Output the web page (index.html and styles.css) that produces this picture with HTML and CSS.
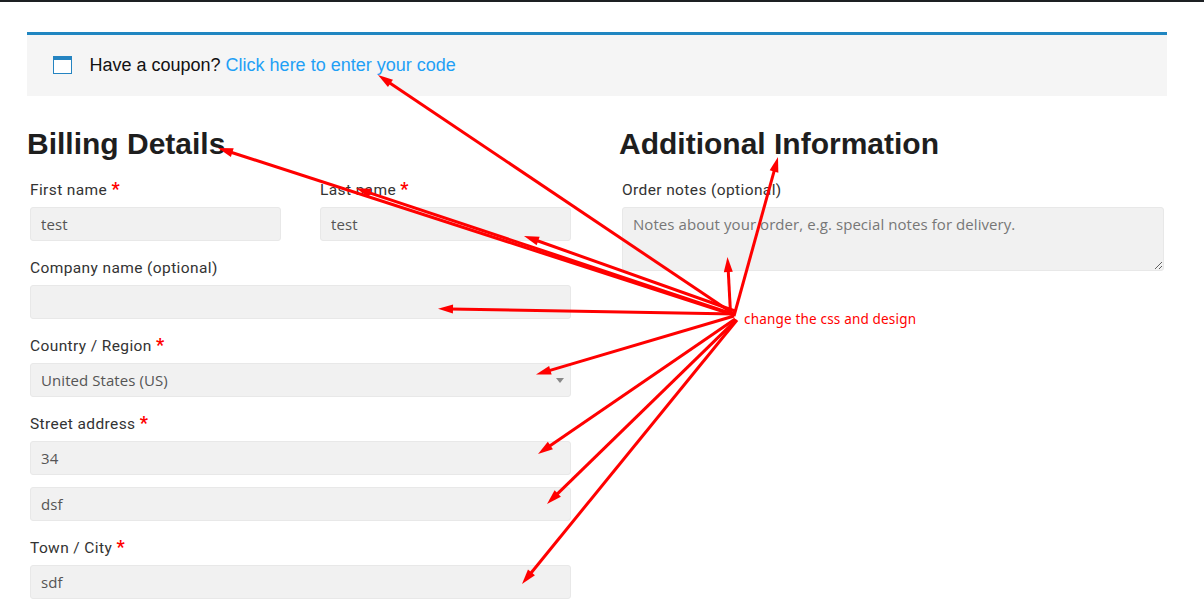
FILE: index.html
```html
<!DOCTYPE html>
<html lang="en">
<head>
<meta charset="utf-8">
<title>Checkout</title>
<link rel="stylesheet" href="styles.css">
</head>
<body>
<main class="page">
  <div class="coupon">
    <svg class="coupon-icon" width="20" height="19" viewBox="0 0 20 19"><path fill="#fff" d="M1 3h17v14H1z"/><path fill="#2584c1" d="M0 0h19v4H0zM0 4h1v14H0zM18 4h1v14h-1zM0 17h19v1H0z"/></svg>
    <p>Have a coupon? <a class="coupon-link">Click here to enter your code</a></p>
  </div>
  <form class="columns">
    <section class="billing">
      <h3 class="title">Billing Details</h3>
      <div class="fields">
        <div class="row">
          <div class="field"><label class="label">First name <b class="req">*</b></label><input class="input" value="test"></div>
          <div class="field"><label class="label">Last name <b class="req">*</b></label><input class="input" value="test"></div>
        </div>
        <div class="field"><label class="label">Company name (optional)</label><input class="input"></div>
        <div class="field"><label class="label">Country / Region <b class="req">*</b></label><div class="input select"><span>United States (US)</span><i class="caret"></i></div></div>
        <div class="field"><label class="label">Street address <b class="req">*</b></label><input class="input" value="34"><input class="input second" value="dsf"></div>
        <div class="field"><label class="label">Town / City <b class="req">*</b></label><input class="input" value="sdf"></div>
      </div>
    </section>
    <section class="additional">
      <h3 class="title">Additional Information</h3>
      <div class="fields">
        <div class="field"><label class="label">Order notes (optional)</label><textarea class="input notes" placeholder="Notes about your order, e.g. special notes for delivery."></textarea></div>
      </div>
    </section>
  </form>
</main>
<svg class="annotations" width="1204" height="605" viewBox="0 0 1204 605">
  <defs><path id="head" d="M0 0L15-4.5V4.5Z"/></defs>
  <g transform="translate(378 75) rotate(33.9)"><use href="#head"/><path d="M12 0H429"/></g>
  <g transform="translate(218 148) rotate(17.95)"><use href="#head"/><path d="M12 0H543"/></g>
  <g transform="translate(356 188.3) rotate(18.44)"><use href="#head"/><path d="M12 0H397"/></g>
  <g transform="translate(524 236) rotate(19.57)"><use href="#head"/><path d="M12 0H224"/></g>
  <g transform="translate(438 308.7) rotate(1.02)"><use href="#head"/><path d="M12 0H297"/></g>
  <g transform="translate(727.5 257) rotate(86.93)"><use href="#head"/><path d="M12 0H56"/></g>
  <g transform="translate(778 157) rotate(105.47)"><use href="#head"/><path d="M12 0H165"/></g>
  <g transform="translate(536 374.5) rotate(-16.46)"><use href="#head"/><path d="M12 0H206.500"/></g>
  <g transform="translate(538 454) rotate(-34.42)"><use href="#head"/><path d="M12 0H239"/></g>
  <g transform="translate(547 504) rotate(-44.23)"><use href="#head"/><path d="M12 0H264"/></g>
  <g transform="translate(522 584) rotate(-50.84)"><use href="#head"/><path d="M12 0H340.500"/></g>
  <text class="note" x="744" y="324" textLength="172">change the css and design</text>
</svg>
</body>
</html>
```
FILE: styles.css
```css
* { box-sizing: border-box; }
body { margin: 0; background: #fff; height: 605px; overflow: hidden; position: relative; }
.page { height: 605px; border-top: 2px solid #1d2023; padding: 30px 37px 0 27px; }
.coupon {
  height: 64px; border-top: 3px solid #2086c1; background: #f5f5f5;
  display: flex; align-items: center; gap: 16.5px; padding: 0 26px 2px;
  font: 18px/24px "Liberation Sans", Arial, sans-serif; color: #111;
}
.coupon p { margin: 0; }
.coupon-icon { margin-top: 2px; }
.coupon-link { color: #1fa0f5; }
.columns { display: flex; gap: 48px; margin: 0; }
.billing { width: 544px; }
.additional { flex: 1; }
.title {
  margin: 28px 0 0; height: 39px; white-space: nowrap; color: #1e1e1e;
  font: bold 30px/39px "Liberation Sans", Arial, sans-serif;
}
.fields { display: flex; flex-direction: column; gap: 15px; padding: 15px 0 0 3px; }
.additional .fields { padding-right: 3px; }
.row { display: flex; gap: 39px; }
.field { flex: 1; min-width: 0; display: flex; flex-direction: column; }
.label {
  height: 24px; margin-bottom: 5px; color: #333;
  font: 15.5px/25px Roboto, sans-serif; letter-spacing: 0.39px; white-space: nowrap;
}
.req { color: red; font-size: 18px; line-height: 20px; }
.input {
  width: 100%; height: 34px; border: 1px solid #e8e8e8; border-radius: 3px; background: #f1f1f1;
  padding: 0 10px; margin: 0; color: #555; outline: none;
  font: 15px/22px "Open Sans", sans-serif; letter-spacing: 0.07px;
}
.second { margin-top: 12px; }
.select { display: flex; align-items: center; justify-content: space-between; padding-right: 6px; }
.caret { width: 0; border: 4px solid transparent; border-top: 5px solid #888; border-bottom: 0; }
.notes { height: 64px; padding: 5px 10px; resize: vertical; overflow: hidden; }
.notes::placeholder { color: #777; }
.annotations { position: absolute; inset: 0; fill: red; stroke: none; pointer-events: none; }
.annotations g > path { stroke: red; stroke-width: 3; fill: none; }
.note { font: 13.5px "Noto Sans", sans-serif; fill: #f00; }
```
